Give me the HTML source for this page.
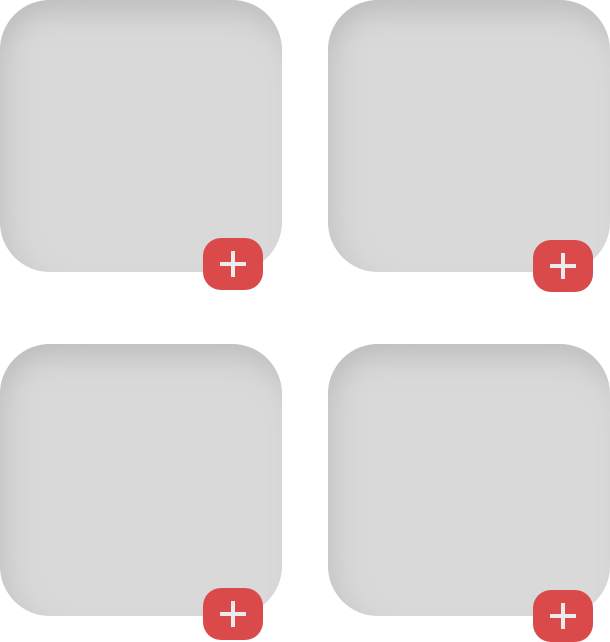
<!DOCTYPE html>
<html><head><style>
html,body{margin:0;padding:0;background:#fff;width:610px;height:642px;overflow:hidden;position:relative}
.t{position:absolute;width:282px;height:272px;border-radius:50px;background:#d9d9d9;box-shadow:inset 0 30px 30px -18px #bdbdbd,inset 30px 0 30px -22px #c6c6c6}
.b{position:absolute;width:60px;height:52px;border-radius:18px;background:#db4a4a}
.b:before{content:"";position:absolute;left:17px;top:24px;width:26px;height:4px;background:#ececec}
.b:after{content:"";position:absolute;left:28px;top:13px;width:4px;height:26px;background:#ececec}
</style></head><body>
<div class="t" style="left:0;top:0"></div>
<div class="t" style="left:328px;top:0"></div>
<div class="t" style="left:0;top:344px"></div>
<div class="t" style="left:328px;top:344px"></div>
<div class="b" style="left:203px;top:238px"></div>
<div class="b" style="left:533px;top:240px"></div>
<div class="b" style="left:203px;top:588px"></div>
<div class="b" style="left:533px;top:590px"></div>
</body></html>
